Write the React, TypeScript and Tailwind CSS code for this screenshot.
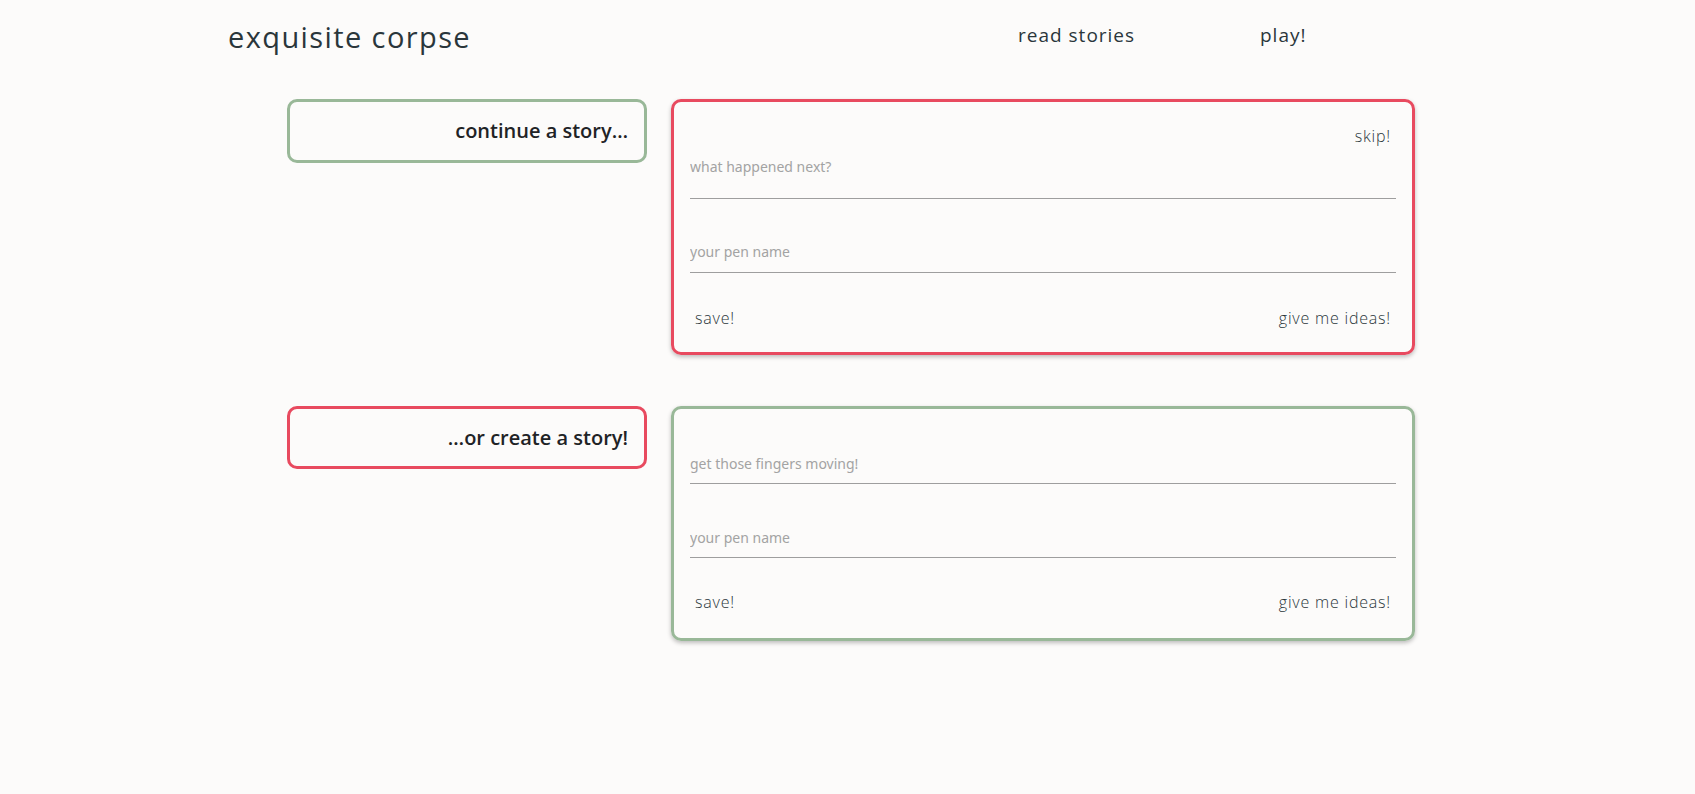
import React from "react";

const head = { fontFamily: '"Open Sans", "Noto Sans", sans-serif' };
const ph = { fontFamily: '"Noto Sans", "Open Sans", sans-serif' };

function Field({ placeholder, h, pt, pb, area }: { placeholder: string; h: string; pt: string; pb: string; area?: boolean }) {
  const cls = `block w-full bg-transparent border-0 border-b border-[#9e9e9e] outline-none resize-none text-[14px] leading-[20px] text-[#2a363b] placeholder:text-[#a3a3a3] px-0 ${h} ${pt} ${pb}`;
  return area ? (
    <textarea placeholder={placeholder} className={cls} style={ph} />
  ) : (
    <input placeholder={placeholder} className={cls} style={ph} />
  );
}

function Buttons() {
  return (
    <div className="flex justify-between items-center h-[24px] px-[5px] text-[16px] font-light tracking-[0.8px] text-[#2a363b]" style={head}>
      <span>save!</span>
      <span>give me ideas!</span>
    </div>
  );
}

export default function App() {
  return (
    <div className="min-h-[794px] w-full bg-[#fcfbfa] text-[#2a363b]">
      <header className="flex items-center h-[76px] pl-[228px]" style={head}>
        <div className="text-[29px] font-medium tracking-[1.4px] w-[790px] -mt-[2px]">exquisite corpse</div>
        <nav className="flex items-center text-[19px] font-medium tracking-[1px] -mt-[6px]">
          <span className="w-[242px]">read stories</span>
          <span>play!</span>
        </nav>
      </header>

      <main className="ml-[287px] mt-[23px] flex flex-col gap-[51px] w-[1128px]">
        <section className="flex gap-[24px] items-start">
          <div className="w-[360px] h-[64px] border-[3px] border-[#99b898] rounded-[10px] flex items-center justify-end pr-[16px] text-[20px] font-semibold text-[#1f2326]" style={head}>
            continue a story…
          </div>
          <div className="w-[744px] h-[256px] border-[3px] border-[#e84a5f] rounded-[10px] shadow-[0_2px_4px_rgba(0,0,0,0.25)] px-[16px] flex flex-col">
            <div className="h-[24px] mt-[22px] flex justify-end items-center pr-[5px] text-[16px] font-light tracking-[0.8px]" style={head}>skip!</div>
            <Field placeholder="what happened next?" h="h-[51px]" pt="pt-[9px]" pb="pb-[21px]" area />
            <Field placeholder="your pen name" h="h-[74px]" pt="pt-[42px]" pb="pb-[11px]" />
            <div className="mt-[33px]">
              <Buttons />
            </div>
          </div>
        </section>

        <section className="flex gap-[24px] items-start">
          <div className="w-[360px] h-[63px] border-[3px] border-[#e84a5f] rounded-[10px] flex items-center justify-end pr-[16px] text-[20px] font-semibold text-[#1f2326]" style={head}>
            …or create a story!
          </div>
          <div className="w-[744px] h-[235px] border-[3px] border-[#99b898] rounded-[10px] shadow-[0_2px_4px_rgba(0,0,0,0.25)] px-[16px] flex flex-col">
            <Field placeholder="get those fingers moving!" h="h-[75px]" pt="pt-[44px]" pb="pb-[10px]" />
            <Field placeholder="your pen name" h="h-[74px]" pt="pt-[43px]" pb="pb-[10px]" />
            <div className="mt-[32px]">
              <Buttons />
            </div>
          </div>
        </section>
      </main>
    </div>
  );
}
